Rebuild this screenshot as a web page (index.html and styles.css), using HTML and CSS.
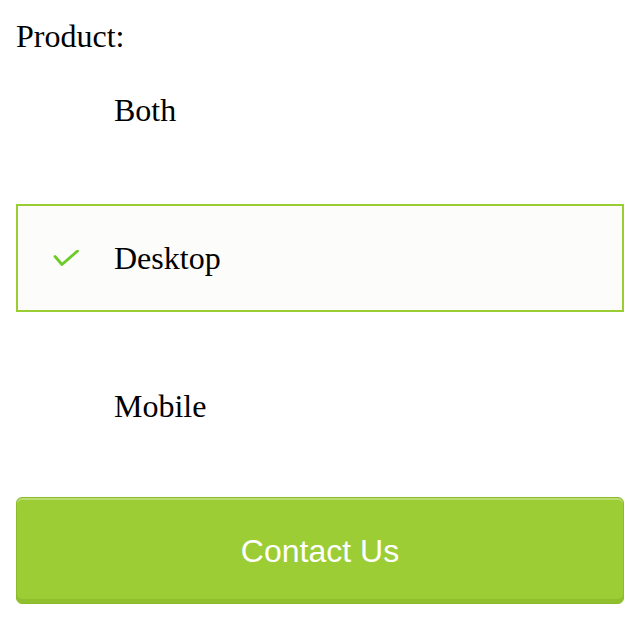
FILE: index.html
```html
<!DOCTYPE html>
<html>
<head>
<meta charset="utf-8">
<link rel="stylesheet" href="styles.css">
</head>
<body>
<div class="form">
  <div class="label">Product:</div>
  <div class="options">
    <div class="option"><span class="check"></span><span class="text">Both</span></div>
    <div class="option selected"><span class="check"><svg width="26" height="18" viewBox="0 0 26 18"><path d="M2 6.5 L9 14.5 L24.5 1" fill="none" stroke="#6ccb25" stroke-width="2.8" stroke-linecap="round" stroke-linejoin="round"/></svg></span><span class="text">Desktop</span></div>
    <div class="option"><span class="check"></span><span class="text">Mobile</span></div>
  </div>
  <button class="contact">Contact Us</button>
</div>
</body>
</html>
```
FILE: styles.css
```css
html, body {
  margin: 0;
  padding: 0;
  background: #ffffff;
}
body {
  padding: 16px;
  font-family: "Liberation Serif", "Times New Roman", serif;
  color: #000;
}
.form {
  display: flex;
  flex-direction: column;
}
.label {
  font-size: 32px;
  line-height: 40px;
}
.options {
  display: flex;
  flex-direction: column;
  gap: 40px;
}
.option {
  box-sizing: border-box;
  height: 108px;
  border: 2px solid transparent;
  display: flex;
  align-items: center;
  font-size: 32px;
}
.option.selected {
  border-color: #9acd32;
  background: #fcfcfa;
}
.check {
  width: 26px;
  height: 18px;
  margin-left: 35px;
  margin-right: 35px;
  display: flex;
  margin-top: 2px;
}
.text {
  line-height: 40px;
}
.contact {
  margin-top: 37px;
  box-sizing: border-box;
  height: 107px;
  width: 100%;
  border: 1px solid #8cbc2c;
  border-radius: 6px;
  background: #9ccd34;
  box-shadow: inset 0 2px 0 rgba(255,255,255,0.3), inset 0 -4px 0 #8fbf2d;
  color: #ffffff;
  font-family: "Liberation Sans", Arial, sans-serif;
  font-size: 32px;
  padding: 0 0 0 0;
  line-height: 38px;
}
```
